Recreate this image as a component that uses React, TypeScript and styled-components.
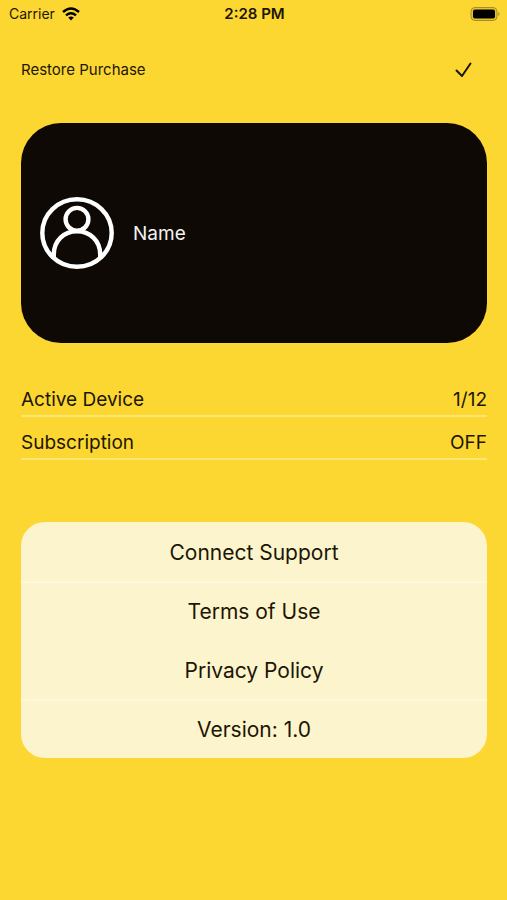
import React from "react";
import styled, { createGlobalStyle } from "styled-components";

const GlobalStyle = createGlobalStyle`
  *, *::before, *::after { box-sizing: border-box; }
  html, body { margin: 0; min-height: 100%; background: #fdd731; }
  body, button { font-family: Inter, "Liberation Sans", sans-serif; color: #1c1605; }
`;

const Screen = styled.div`
  min-height: 100vh;
  background: #fdd731;
`;

const StatusBar = styled.header`
  display: grid;
  grid-template-columns: 1fr auto 1fr;
  align-items: center;
  height: 27px;
  padding: 0 7px 0 9px;
  font-size: 14px;
`;

const Carrier = styled.div`
  display: flex;
  align-items: center;
  gap: 7px;
`;

const Clock = styled.time`
  font-size: 15px;
  font-weight: 600;
`;

const BatteryIcon = styled.svg`
  justify-self: end;
`;

const Content = styled.main`
  display: flex;
  flex-direction: column;
  padding: 0 20px 0 21px;
`;

const Toolbar = styled.div`
  display: flex;
  align-items: center;
  justify-content: space-between;
  height: 40px;
  margin-top: 23px;
  padding-right: 14px;
`;

const PlainButton = styled.button`
  display: flex;
  align-items: center;
  padding: 0;
  border: 0;
  background: none;
  font-size: 15px;
  line-height: 20px;
`;

const ProfileCard = styled.section`
  display: flex;
  align-items: center;
  gap: 19px;
  height: 220px;
  margin-top: 33px;
  padding: 0 19px;
  border-radius: 40px;
  background: #0e0905;
  color: #f4f2f0;
  font-size: 19px;
`;

const Details = styled.dl`
  margin: 40px 0 0;
`;

const DetailRow = styled.div`
  display: flex;
  align-items: flex-end;
  justify-content: space-between;
  height: 43px;
  padding-bottom: 3px;
  border-bottom: 2px solid #fee670;
  font-size: 19px;
  line-height: 24px;

  &:first-child { height: 34px; }
  dd { margin: 0; }
`;

const Menu = styled.nav`
  display: flex;
  flex-direction: column;
  margin-top: 62px;
  border-radius: 24px;
  background: #fcf4cc;
  overflow: hidden;
`;

const MenuItem = styled.button<{ $divided?: boolean }>`
  height: 59px;
  padding: 0;
  border: 0;
  border-top: 2px solid ${(p) => (p.$divided ? "#fef8dc" : "transparent")};
  background: none;
  font-size: 21px;
`;

export default function App() {
  return (
    <Screen>
      <GlobalStyle />
      <StatusBar>
        <Carrier>
          Carrier
          <svg width="18" height="14" viewBox="0 0 18 14" fill="none" stroke="#000" strokeWidth="2.5" aria-label="Wi-Fi">
            <path d="M1 5Q9-2 17 5M4 8.4Q9 4.2 14 8.4" />
            <path d="M9 13.5 6.2 10.6Q9 8.4 11.8 10.6Z" fill="#000" stroke="none" />
          </svg>
        </Carrier>
        <Clock>2:28 PM</Clock>
        <BatteryIcon width="30" height="14" viewBox="0 0 30 14" aria-label="Battery full">
          <rect x="1" y="0.5" width="26" height="13" rx="4" fill="#e5c22e" stroke="#a58d28" />
          <rect x="3" y="2.5" width="22" height="9" rx="2" fill="#000" />
          <path d="M28.3 4.7Q30.7 7 28.3 9.3Z" fill="#a58d28" />
        </BatteryIcon>
      </StatusBar>
      <Content>
        <Toolbar>
          <PlainButton>Restore Purchase</PlainButton>
          <PlainButton aria-label="Done">
            <svg width="20" height="18" viewBox="0 0 20 18" fill="none" stroke="#1c1605" strokeWidth="2" strokeLinecap="round" strokeLinejoin="round">
              <path d="M3.5 9.5 9 15 17.5 2.5" />
            </svg>
          </PlainButton>
        </Toolbar>
        <ProfileCard>
          <svg width="74" height="72" viewBox="0 0 74 72" fill="none" stroke="#fff" strokeWidth="4.4" aria-hidden="true">
            <ellipse cx="37" cy="36" rx="34.7" ry="33.8" />
            <circle cx="37" cy="22.3" r="11.4" />
            <path d="M13.8 61V57.5C13.8 43.5 24.2 34.3 37 34.3S60.2 43.5 60.2 57.5V61" />
          </svg>
          <span>Name</span>
        </ProfileCard>
        <Details>
          <DetailRow><dt>Active Device</dt><dd>1/12</dd></DetailRow>
          <DetailRow><dt>Subscription</dt><dd>OFF</dd></DetailRow>
        </Details>
        <Menu>
          <MenuItem>Connect Support</MenuItem>
          <MenuItem $divided>Terms of Use</MenuItem>
          <MenuItem>Privacy Policy</MenuItem>
          <MenuItem $divided>Version: 1.0</MenuItem>
        </Menu>
      </Content>
    </Screen>
  );
}
